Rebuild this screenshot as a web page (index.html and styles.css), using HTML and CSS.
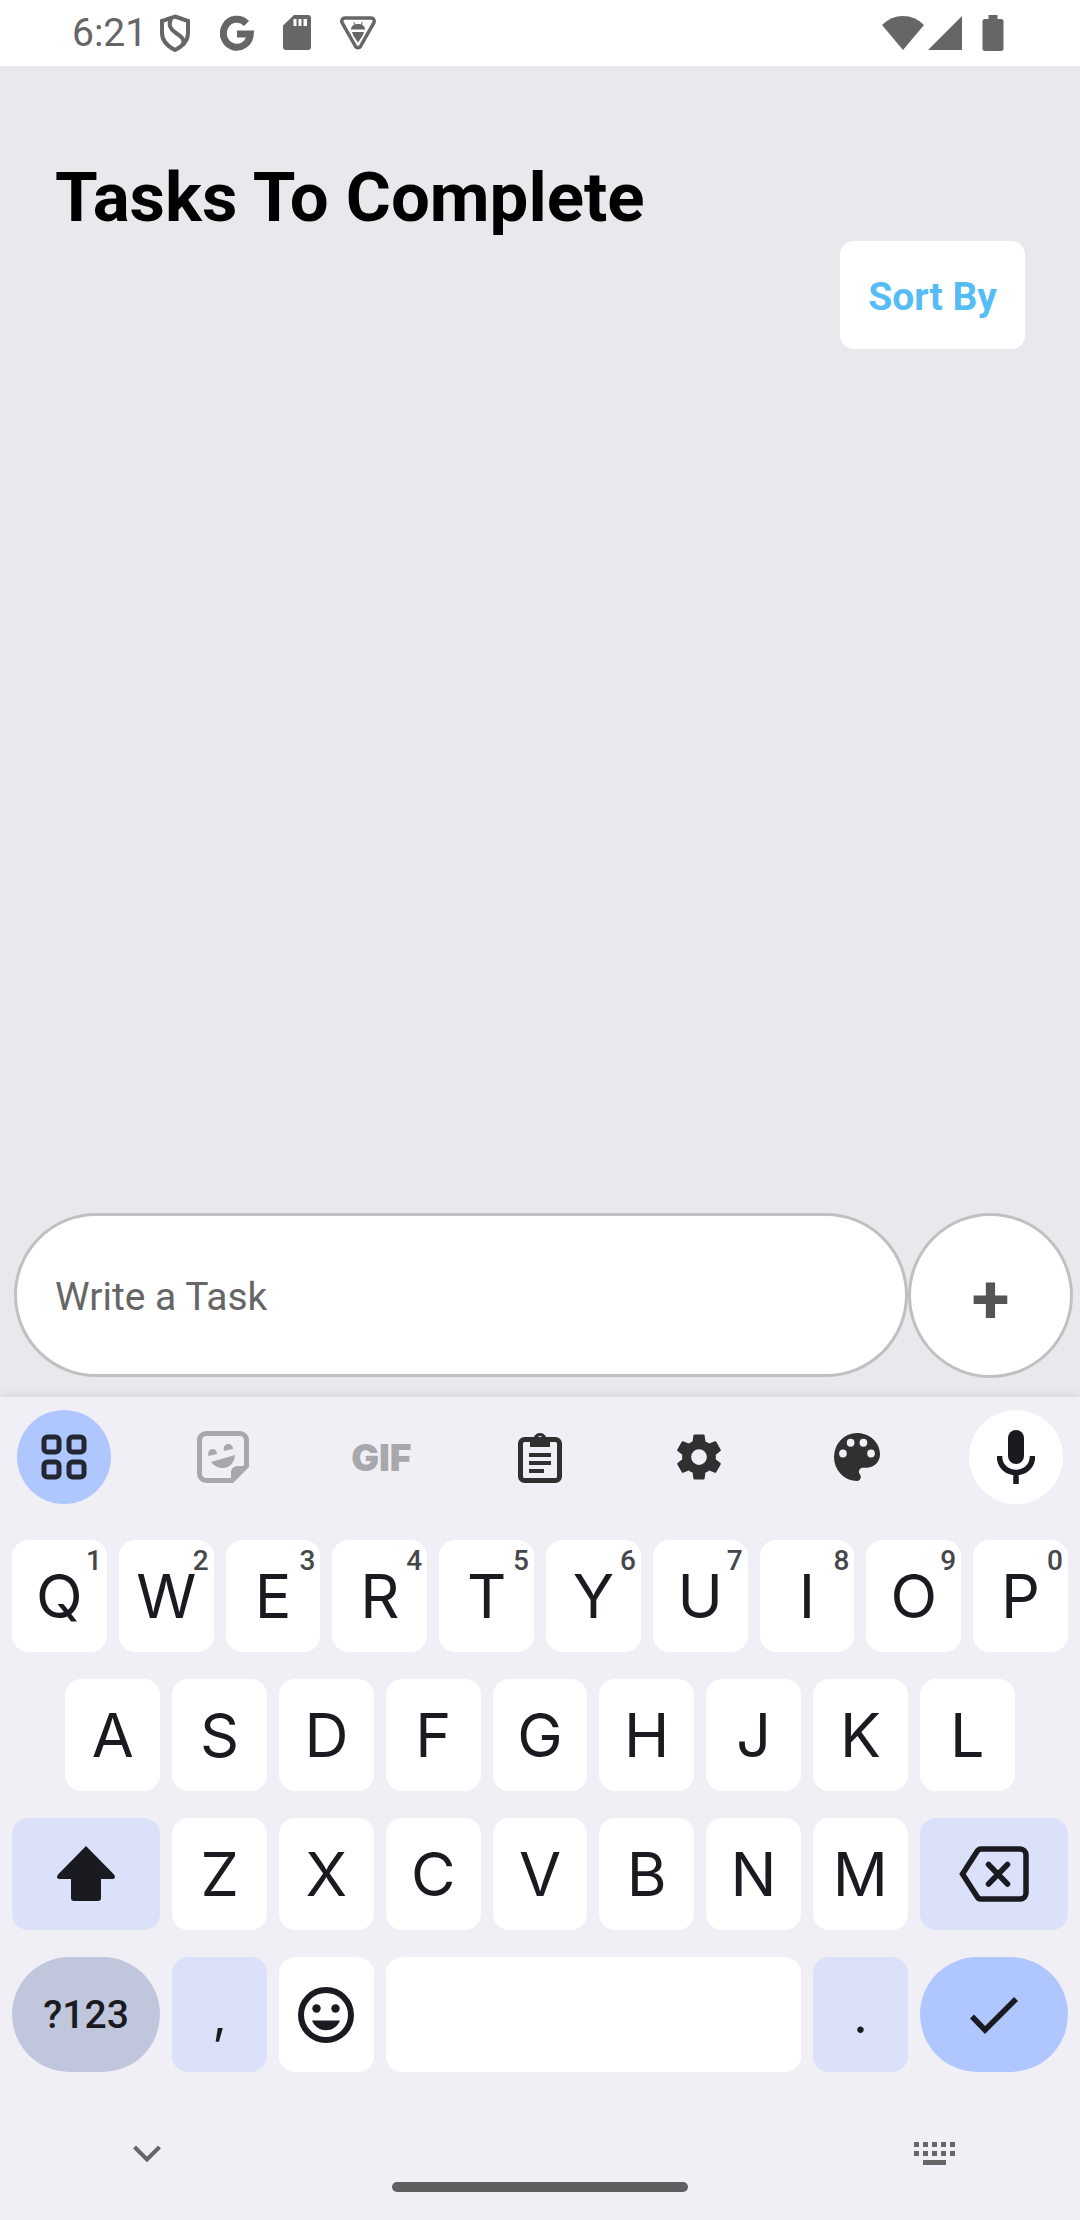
FILE: index.html
```html
<!DOCTYPE html>
<html lang="en">
<head>
<meta charset="utf-8">
<meta name="viewport" content="width=device-width, initial-scale=1">
<title>Tasks To Complete</title>
<link rel="stylesheet" href="styles.css">
</head>
<body>
<header class="status">
  <div class="status-left">
    <span class="clock">6:21</span>
    <svg class="icon" width="32" height="38" viewBox="0 0 32 38" fill="none" stroke="currentColor" stroke-width="4"><path d="M16 2.500 29 7v12c0 8-5 13-13 17C8 32 3 27 3 19V7z"/><path d="M12 5c-3 6-1 10 5 14s9 7 7 12" stroke-width="4"/></svg>
    <svg class="icon" width="34" height="36" viewBox="0 0 34 36" fill="none" stroke="currentColor" stroke-width="7"><path d="M26.500 8.500A13.500 14 0 1 0 30.300 19H17"/></svg>
    <svg class="icon" width="28" height="36" viewBox="0 0 28 36" fill="currentColor"><path fill-rule="evenodd" d="M11 0h14a3 3 0 0 1 3 3v29a3 3 0 0 1-3 3H3a3 3 0 0 1-3-3V10.500zM10.500 4v7h3V4zM15.500 4v7h3V4zM20.500 4v7h3.500V4z"/></svg>
    <svg class="icon" width="36" height="34" viewBox="0 0 36 34"><path d="M5 2h26c3 0 4 3 2.500 5.500L21 29.500c-1.500 3-4.500 3-6 0L2.500 7.500C1 5 2 2 5 2z" fill="none" stroke="currentColor" stroke-width="3.500"/><path d="M11.500 13.500c0-3 2-4.500 3.500-5l-1.500-2.500M24.500 13.500c0-3-2-4.500-3.500-5l1.500-2.500" fill="none" stroke="currentColor"/><path d="M11.500 13.500C11.500 6 24.500 6 24.500 13.500zM12 16h12l-1.500 4L18 26.500 13.500 20z" fill="currentColor"/></svg>
  </div>
  <div class="status-right">
    <svg width="42" height="36" viewBox="0 0 42 36" fill="currentColor"><path d="M21 35 0 10Q9 1 21 1t21 9z"/></svg>
    <svg width="34" height="36" viewBox="0 0 34 36" fill="currentColor"><path d="M34 1v34H0z"/></svg>
    <svg class="battery" width="22" height="36" viewBox="0 0 22 36" fill="currentColor"><path d="M6.500 0h9v4H19a2.500 2.500 0 0 1 2.500 2.500v27A2.500 2.500 0 0 1 19 36H3a2.500 2.500 0 0 1-2.500-2.500v-27A2.500 2.500 0 0 1 3 4h3.500z"/></svg>
  </div>
</header>

<main class="app">
  <h1 class="title">Tasks To Complete</h1>
  <button class="sort" type="button">Sort By</button>
  <form class="composer">
    <input class="task-input" type="text" placeholder="Write a Task" aria-label="Write a Task">
    <button class="add" type="button" aria-label="Add task">+</button>
  </form>
</main>

<section class="keyboard" aria-label="Keyboard">
  <div class="tools">
    <button class="tool tool-active" type="button" aria-label="Features"><svg width="46" height="46" viewBox="0 0 46 46" fill="none" stroke="currentColor" stroke-width="5"><rect x="3" y="3" width="15" height="15" rx="3.500"/><rect x="28" y="3" width="15" height="15" rx="3.500"/><rect x="3" y="28" width="15" height="15" rx="3.500"/><rect x="28" y="28" width="15" height="15" rx="3.500"/></svg></button>
    <button class="tool tool-dim" type="button" aria-label="Stickers"><svg width="52" height="52" viewBox="0 0 52 52"><path d="M35 49.500H9A6.500 6.500 0 0 1 2.500 43V9A6.500 6.500 0 0 1 9 2.500h34A6.500 6.500 0 0 1 49.500 9v26z" fill="none" stroke="currentColor" stroke-width="5"/><path d="M51 35 36 51h-2V42c0-5 3-7 7-7zM11.500 25c-1-4 1-7 4-7s4.500 2 4.500 5zM27 20c-1-4 1-7 4-7s5 2 5 5zM14 31l24-7c-.500 7-5 13-12 13-5 0-9-2-12-6z" fill="currentColor"/></svg></button>
    <button class="tool tool-dim tool-gif" type="button">GIF</button>
    <button class="tool" type="button" aria-label="Clipboard"><svg width="44" height="52" viewBox="0 0 44 52"><rect x="2.500" y="8.500" width="39" height="41" rx="4" fill="none" stroke="currentColor" stroke-width="5"/><path fill-rule="evenodd" d="M12 6h4a6.500 6.500 0 0 1 12 0h4v10H12zM22 5a2.500 2.500 0 1 0 .1 0z" fill="currentColor"/><path d="M11 24h22M11 32h22M11 40h15" stroke="currentColor" stroke-width="4"/></svg></button>
    <button class="tool" type="button" aria-label="Settings"><svg width="54" height="54" viewBox="0 0 24 24" fill="currentColor"><path d="M19.430 12.980c.040-.320.070-.640.070-.980s-.030-.660-.070-.980l2.110-1.650c.190-.150.240-.420.120-.640l-2-3.460c-.120-.220-.390-.300-.610-.220l-2.490 1c-.520-.400-1.080-.730-1.690-.980l-.380-2.650A.488.488 0 0 0 14 2h-4c-.250 0-.460.180-.490.420l-.380 2.650c-.610.250-1.170.590-1.690.980l-2.490-1c-.230-.090-.490 0-.610.220l-2 3.460c-.130.220-.070.490.120.640l2.110 1.650c-.040.320-.070.650-.070.980s.030.660.070.980l-2.110 1.650c-.190.150-.240.420-.120.640l2 3.460c.120.220.390.300.610.220l2.490-1c.520.400 1.080.730 1.690.980l.380 2.650c.030.240.240.420.490.420h4c.250 0 .460-.180.490-.420l.380-2.650c.610-.250 1.170-.590 1.690-.980l2.490 1c.230.090.490 0 .610-.220l2-3.460c.120-.220.070-.490-.120-.640zM12 15.500a3.500 3.500 0 1 1 0-7 3.500 3.500 0 0 1 0 7z"/></svg></button>
    <button class="tool" type="button" aria-label="Theme"><svg width="46" height="48" viewBox="3 3 18 18" preserveAspectRatio="none" fill="currentColor"><path d="M12 3a9 9 0 0 0 0 18c.830 0 1.500-.670 1.500-1.500 0-.390-.150-.740-.390-1.010-.230-.260-.380-.610-.380-.990 0-.830.670-1.500 1.500-1.500H16c2.760 0 5-2.240 5-5 0-4.420-4.030-8-9-8z"/><g fill="#f0eff6"><circle cx="6.500" cy="10.700" r="1.500"/><circle cx="9.500" cy="6.700" r="1.500"/><circle cx="14.500" cy="6.700" r="1.500"/><circle cx="17.500" cy="10.700" r="1.500"/></g></svg></button>
    <button class="tool tool-mic" type="button" aria-label="Voice input"><svg width="38" height="54" viewBox="0 0 38 54"><rect x="11" y="0" width="16" height="34" rx="8" fill="currentColor"/><path d="M2.500 26c0 22 33 22 33 0M19 43v11" fill="none" stroke="currentColor" stroke-width="5.500"/></svg></button>
  </div>

  <div class="rows">
    <div class="row">
      <button class="key" type="button">Q<sup class="hint">1</sup></button>
      <button class="key" type="button">W<sup class="hint">2</sup></button>
      <button class="key" type="button">E<sup class="hint">3</sup></button>
      <button class="key" type="button">R<sup class="hint">4</sup></button>
      <button class="key" type="button">T<sup class="hint">5</sup></button>
      <button class="key" type="button">Y<sup class="hint">6</sup></button>
      <button class="key" type="button">U<sup class="hint">7</sup></button>
      <button class="key" type="button">I<sup class="hint">8</sup></button>
      <button class="key" type="button">O<sup class="hint">9</sup></button>
      <button class="key" type="button">P<sup class="hint">0</sup></button>
    </div>
    <div class="row row-inset">
      <button class="key" type="button">A</button>
      <button class="key" type="button">S</button>
      <button class="key" type="button">D</button>
      <button class="key" type="button">F</button>
      <button class="key" type="button">G</button>
      <button class="key" type="button">H</button>
      <button class="key" type="button">J</button>
      <button class="key" type="button">K</button>
      <button class="key" type="button">L</button>
    </div>
    <div class="row">
      <button class="key key-wide key-tint" type="button" aria-label="Shift"><svg width="60" height="56" viewBox="0 0 60 56" fill="currentColor"><path d="M30 0 57.500 28c2.500 3 1.500 5-1.500 5H45v19a3 3 0 0 1-3 3H18a3 3 0 0 1-3-3V33H4c-3 0-4-2-1.500-5z"/></svg></button>
      <button class="key" type="button">Z</button>
      <button class="key" type="button">X</button>
      <button class="key" type="button">C</button>
      <button class="key" type="button">V</button>
      <button class="key" type="button">B</button>
      <button class="key" type="button">N</button>
      <button class="key" type="button">M</button>
      <button class="key key-wide key-tint" type="button" aria-label="Delete"><svg width="70" height="56" viewBox="0 0 70 56" fill="none" stroke="currentColor" stroke-width="5.500"><path d="M22 3h39a6 6 0 0 1 6 6v38a6 6 0 0 1-6 6H22q-2.500 0-4-2.500L3.500 28 18 5.500Q19.500 3 22 3z"/><path d="M29.500 18.500 48.500 38M48.500 18.500 29.500 38" stroke-linecap="round"/></svg></button>
    </div>
    <div class="row row-last">
      <button class="key key-wide key-symbols" type="button">?123</button>
      <button class="key key-tint key-punct" type="button">,</button>
      <button class="key" type="button" aria-label="Emoji"><svg width="56" height="56" viewBox="0 0 56 56" fill="currentColor"><circle cx="28" cy="28" r="25" fill="none" stroke="currentColor" stroke-width="6"/><circle cx="18.500" cy="21.500" r="4.200"/><circle cx="37.500" cy="21.500" r="4.200"/><path d="M14 33.500h28c-5 13-23 13-28 0z"/></svg></button>
      <button class="key key-space" type="button" aria-label="Space"></button>
      <button class="key key-tint key-punct" type="button">.</button>
      <button class="key key-wide key-enter" type="button" aria-label="Done"><svg width="48" height="38" viewBox="0 0 48 38" fill="none" stroke="currentColor" stroke-width="5.500"><path d="M2 20.500 15 34 46 3"/></svg></button>
    </div>
  </div>

  <nav class="nav">
    <button class="nav-btn" type="button" aria-label="Hide keyboard"><svg width="28" height="18" viewBox="0 0 28 18" fill="none" stroke="currentColor" stroke-width="4"><path d="M1.500 2 14 14.500 26.500 2"/></svg></button>
    <button class="nav-btn nav-switch" type="button" aria-label="Switch keyboard"><svg width="42" height="24" viewBox="0 0 42 24" fill="currentColor"><path d="M0 0h5v5H0zM9 0h5v5H9zM18 0h5v5h-5zM27 0h5v5h-5zM36 0h5v5h-5zM0 9h5v5H0zM9 9h5v5H9zM18 9h5v5h-5zM27 9h5v5h-5zM36 9h5v5h-5zM9 18h23v5H9z"/></svg></button>
  </nav>
  <div class="home-bar"></div>
</section>
</body>
</html>
```
FILE: styles.css
```css
* {
  box-sizing: border-box;
}

body {
  margin: 0;
  min-height: 100vh;
  display: flex;
  flex-direction: column;
  background: #e8e9ed;
  font-family: Roboto, sans-serif;
}

button {
  margin: 0;
  padding: 0;
  border: 0;
  background: none;
  color: inherit;
  font: inherit;
}

svg {
  display: block;
  flex: none;
}

/* Status bar */
.status {
  display: flex;
  align-items: center;
  justify-content: space-between;
  height: 66px;
  padding: 0 76px 0 72px;
  background: #fff;
  color: #666;
}

.status-left {
  display: flex;
  align-items: center;
  gap: 29px;
}

.clock {
  margin-right: -17px;
  font-size: 39px;
  line-height: 66px;
}

.status-right {
  display: flex;
  align-items: center;
  gap: 4px;
}

.battery {
  margin-left: 16px;
}

/* Task screen */
.app {
  flex: 1;
  display: flex;
  flex-direction: column;
}

.title {
  margin: 92px 55px 0;
  font-size: 69px;
  line-height: 80px;
  font-weight: 700;
  color: #000;
}

.sort {
  align-self: flex-end;
  margin: 3px 55px 0;
  padding: 34px 28px 30px;
  border-radius: 14px;
  background: #fff;
  color: #55bcf6;
  font-size: 39px;
  line-height: 44px;
  font-weight: 700;
}

.composer {
  display: flex;
  margin-top: auto;
  padding: 0 7px 19px 14px;
}

.task-input {
  flex: 1;
  min-width: 0;
  height: 164px;
  padding: 4px 38px 0;
  border: 3px solid #c0c0c0;
  border-radius: 82px;
  background: #fff;
  font: 39px Roboto, sans-serif;
  color: #000;
}

.task-input::placeholder {
  color: #666;
  opacity: 1;
}

.add {
  width: 165px;
  height: 165px;
  padding-top: 8px;
  border: 3px solid #c0c0c0;
  border-radius: 50%;
  background: #fff;
  color: #555;
  font-size: 69px;
  font-weight: 700;
}

/* Keyboard */
.keyboard {
  background: #f0eff6;
  color: #1a1b20;
  box-shadow: 0 -1px 8px rgba(0, 0, 0, 0.1);
}

.tools {
  display: flex;
  justify-content: space-between;
  padding: 13px 17px 36px;
}

.tool {
  display: flex;
  align-items: center;
  justify-content: center;
  width: 94px;
  height: 94px;
  border-radius: 50%;
  color: #303030;
}

.tool-active {
  background: #afc6ff;
  color: #222732;
}

.tool-dim {
  color: #a8a8ac;
}

.tool-gif {
  font: 900 37px Inter, sans-serif;
}

.tool-mic {
  background: #fff;
  color: #1a1b20;
}

.rows {
  display: flex;
  flex-direction: column;
  gap: 27px;
  padding: 0 6px;
}

.row {
  display: grid;
  grid-template-columns: repeat(20, 1fr);
  grid-auto-rows: 112px;
}

.row-last {
  grid-auto-rows: 115px;
}

.key {
  position: relative;
  display: flex;
  align-items: center;
  justify-content: center;
  grid-column: span 2;
  min-width: 0;
  margin: 0 6px;
  border-radius: 16px;
  background: #fff;
  font: 61px Inter, sans-serif;
}

.row-inset .key:first-child {
  grid-column: 2 / span 2;
}

.key-wide {
  grid-column: span 3;
}

.key-space {
  grid-column: span 8;
}

.key-tint {
  background: #dce1fa;
}

.key-symbols {
  border-radius: 58px;
  background: #c0c6dc;
  font: 500 39px Roboto, sans-serif;
}

.key-enter {
  border-radius: 58px;
  background: #afc6ff;
}

.key-punct {
  font-size: 50px;
}

.hint {
  position: absolute;
  top: 5px;
  right: 5px;
  font: 500 28px/32px Roboto, sans-serif;
  color: #46474b;
}

/* Navigation */
.nav {
  display: flex;
  align-items: center;
  justify-content: space-between;
  height: 110px;
  padding: 54px 124px 0 133px;
  color: #666;
}

.home-bar {
  width: 296px;
  height: 10px;
  margin: 0 auto 28px;
  border-radius: 5px;
  background: #5f5f61;
}
```
